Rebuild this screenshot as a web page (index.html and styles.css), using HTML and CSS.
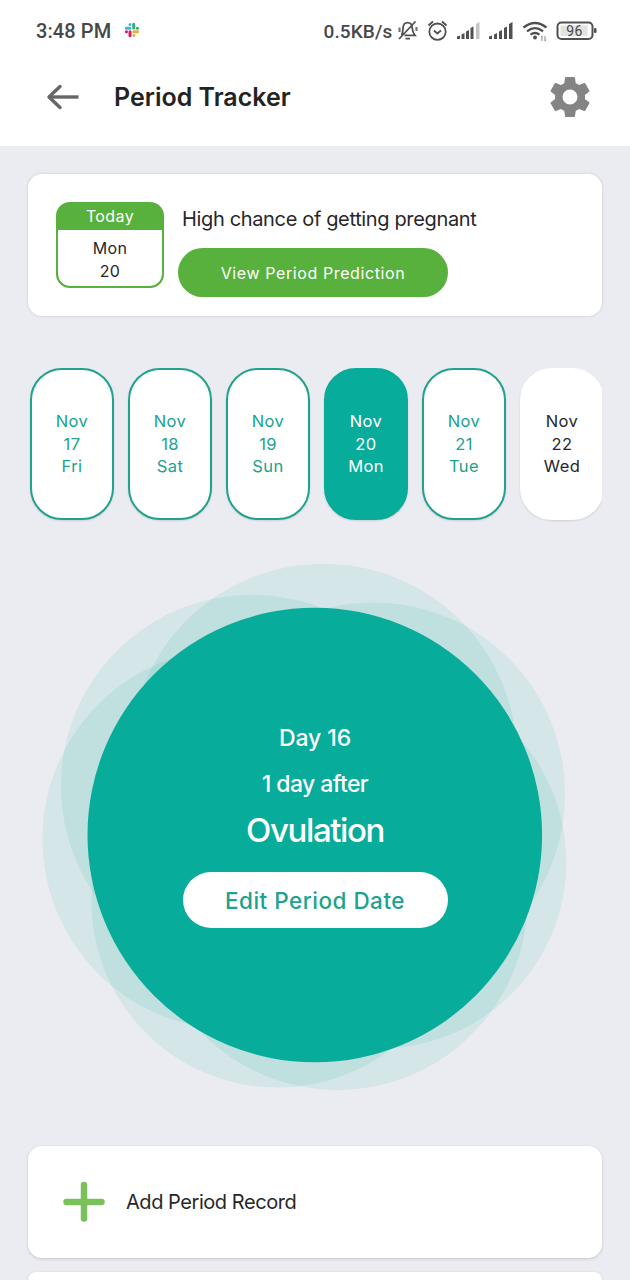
FILE: index.html
```html
<!DOCTYPE html>
<html lang="en">
<head>
<meta charset="utf-8">
<title>Period Tracker</title>
<link rel="stylesheet" href="styles.css">
</head>
<body>
<div class="top">
  <div class="status">
    <span class="clock">3:48 PM</span>
    <svg class="slack" width="16" height="16" viewBox="0 0 16 16" fill="none" stroke-width="3" stroke-linecap="round">
      <path stroke="#36b9e0" d="M2.300 6.200H6M6 2.500V2.600"/>
      <path stroke="#2fae7c" d="M9.700 2.300V6M13.400 6.200H13.500"/>
      <path stroke="#e8b03a" d="M9.800 9.800H13.700M9.800 13.400V13.500"/>
      <path stroke="#d3205c" d="M6 9.800V13.700M2.400 9.800H2.500"/>
    </svg>
    <span class="speed">0.5KB/s</span>
    <svg class="sicons" width="202" height="24" viewBox="396 18 202 24" fill="none" stroke="#505050" stroke-width="1.8">
      <path d="M401.500 35C403 33 402.800 30 403 28C403.300 24.500 405 22.700 407.500 22.700S412 24.500 412.200 28C412.400 31 413 33 415 35.300H404.500M405.500 38.700H410M399 39L415.500 21.500" />
      <path d="M399.500 27.500V32M416.500 27V31" stroke="#777" stroke-width="2.200"/>
      <circle cx="437.500" cy="31.700" r="8.200"/>
      <path d="M434 30.500L437.300 33.500L441 30.500M428.500 25.500L433 21.500M442 21.500L446.500 25.500"/>
      <g stroke="none" fill="#505050">
        <path d="M457 36.500L460 35.500V39H457ZM461.500 34.500L464.500 33V39H461.500ZM466 31.500L469 30V39H466ZM470.500 28L473.500 26.500V39H470.500Z"/>
        <path fill="#c4c4c4" d="M476 24L479.500 22V39H476Z"/>
        <path d="M489 36.500L492 35.500V39H489ZM494 34.500L497 33V39H494ZM499 31.500L502 30V39H499ZM504 28L507 26.500V39H504ZM509 24L512.500 22V39H509Z"/>
        <circle cx="535" cy="37.500" r="2"/>
      </g>
      <path stroke-width="2.300" d="M523.500 27.500Q535 18.500 546.500 27.500M527 31.300Q535 25 543 31.300M530.500 34.700Q535 31.200 539.500 34.700"/>
      <path stroke="#888" stroke-width="1" d="M542 36V41M540.800 37.300L542 36M545 36V41M546.200 39.700L545 41"/>
      <rect x="557.500" y="22.500" width="35" height="16.500" rx="4" stroke-width="2"/>
      <rect x="560.500" y="25.500" width="27" height="10.500" fill="#e2e2e2" stroke="none"/>
      <rect x="594" y="28" width="2.500" height="5" rx="1" fill="#505050" stroke="none"/>
      <text x="574.500" y="35.500" class="battery" text-anchor="middle">96</text>
    </svg>
  </div>
  <div class="appbar">
    <svg class="back" width="34" height="26" viewBox="0 0 34 26" fill="none" stroke="#666" stroke-width="3.400" stroke-linecap="round" stroke-linejoin="round"><path d="M14 2.500L3 13L14 23.500"/><path stroke-linecap="butt" d="M3 13H32.500"/></svg>
    <h1 class="title">Period Tracker</h1>
    <svg class="gear" width="48" height="48" viewBox="0 0 24 24"><path fill="#848484" d="M19.430 12.980c.04-.32.070-.64.070-.98s-.03-.66-.07-.98l2.110-1.650c.19-.15.240-.42.120-.64l-2-3.460c-.12-.22-.39-.3-.61-.22l-2.490 1c-.52-.4-1.080-.73-1.690-.98l-.38-2.650C14.460 2.180 14.250 2 14 2h-4c-.25 0-.46.18-.49.420l-.38 2.650c-.61.250-1.170.59-1.690.98l-2.490-1c-.23-.09-.49 0-.61.220l-2 3.460c-.13.220-.07.490.120.640l2.110 1.650c-.04.320-.07.650-.07.980s.03.660.070.980l-2.110 1.650c-.19.150-.24.420-.12.640l2 3.460c.12.220.39.300.61.220l2.490-1c.52.400 1.080.73 1.690.98l.38 2.650c.03.240.24.420.49.420h4c.25 0 .46-.18.490-.42l.38-2.650c.61-.25 1.170-.59 1.690-.98l2.490 1c.23.090.49 0 .61-.22l2-3.460c.12-.22.070-.49-.12-.64zM12 15.750a3.750 3.750 0 1 1 0-7.500 3.750 3.750 0 0 1 0 7.500z"/></svg>
  </div>
</div>
<main class="content">
  <section class="card chance">
    <div class="today">
      <div class="today-head">Today</div>
      <div class="today-body">Mon<br>20</div>
    </div>
    <div class="chance-info">
      <p class="chance-text">High chance of getting pregnant</p>
      <button class="predict">View Period Prediction</button>
    </div>
  </section>
  <div class="days">
    <div class="day">Nov<br>17<br>Fri</div>
    <div class="day">Nov<br>18<br>Sat</div>
    <div class="day">Nov<br>19<br>Sun</div>
    <div class="day selected">Nov<br>20<br>Mon</div>
    <div class="day">Nov<br>21<br>Tue</div>
    <div class="day plain">Nov<br>22<br>Wed</div>
  </div>
  <section class="cycle">
    <svg class="petals" width="574" height="540" viewBox="28 556 574 540">
      <g fill="#08ac90" fill-opacity=".1">
        <circle cx="323.500" cy="757.200" r="193.500"/>
        <circle cx="252.300" cy="786" r="191.300"/>
        <circle cx="373.500" cy="794" r="191.500"/>
        <circle cx="233" cy="839" r="190.500"/>
        <circle cx="380" cy="862" r="186.300"/>
        <circle cx="277.500" cy="901.500" r="186"/>
        <circle cx="337.500" cy="900" r="190"/>
      </g>
      <circle cx="314.800" cy="835" r="227.300" fill="#08ac9a"/>
    </svg>
    <div class="cycle-info">
      <p class="cycle-day">Day 16</p>
      <p class="cycle-after">1 day after</p>
      <p class="cycle-phase">Ovulation</p>
      <button class="edit">Edit Period Date</button>
    </div>
  </section>
  <section class="card record">
    <svg width="42" height="42" viewBox="0 0 42 42" stroke="#7bc15a" stroke-width="6.500" stroke-linecap="round"><path d="M21 4V37.500M3.500 21H38.500"/></svg>
    <span class="record-text">Add Period Record</span>
  </section>
  <section class="card next"></section>
</main>
</body>
</html>
```
FILE: styles.css
```css
* { box-sizing: border-box; }
body { margin: 0; width: 630px; height: 1280px; overflow: hidden; background: #ebecf2; color: #27272a; font-family: Inter, "Noto Sans", sans-serif; }
p, h1 { margin: 0; white-space: nowrap; }
button { border: 0; padding: 0; font-family: inherit; white-space: nowrap; }
.top { height: 146px; background: #fff; }
.status { height: 62px; padding-left: 36px; display: flex; align-items: center; font-family: Roboto, sans-serif; font-weight: 500; color: #484848; }
.clock { font-size: 20px; width: 88px; letter-spacing: .1px; }
.slack { margin-top: -2px; }
.speed { margin-left: 183.500px; width: 72.500px; font-size: 19px; letter-spacing: .1px; white-space: nowrap; }
.sicons { margin-top: -3px; flex: none; }
.battery { font: 400 14px Roboto, sans-serif; fill: #484848; stroke: none; letter-spacing: .4px; }
.appbar { height: 70px; padding-left: 46px; display: flex; align-items: center; }
.title { margin-left: 34px; width: 432px; font-size: 25px; font-weight: 600; color: #232323; }
.content { padding: 28px 28px 0; }
.card { background: #fff; border-radius: 14px; box-shadow: 0 1px 3px rgba(40,45,60,.2); }
.chance { height: 142px; padding: 28px; display: flex; align-items: flex-start; box-shadow: 0 0 3px rgba(40,45,60,.18); }
.today { width: 108px; height: 86px; border: 2px solid #58b13c; border-radius: 14px; overflow: hidden; text-align: center; font-size: 16px; letter-spacing: .4px; background: #58b13c; }
.today-head { height: 26px; line-height: 25px; color: #fff; }
.today-body { height: 56px; padding-top: 7px; line-height: 23px; background: #fff; border-radius: 0 0 12px 12px; }
.chance-info { margin-left: 14px; }
.chance-text { margin-left: 4px; height: 46px; line-height: 34px; font-size: 20px; letter-spacing: -.35px; }
.predict { width: 270px; height: 49px; border-radius: 25px; background: #58b13c; color: #fff; font-size: 16px; letter-spacing: .6px; }
.days { margin-top: 51px; height: 155px; padding: 1px 0 3px 2px; display: flex; gap: 14px; overflow: hidden; }
.day { flex: 0 0 84px; height: 152px; padding-top: 40px; border: 2px solid #20a28e; border-radius: 32px; background: #fff; color: #20a28e; text-align: center; line-height: 22.700px; font-size: 16.500px; letter-spacing: .4px; box-shadow: 0 1px 2px rgba(40,45,60,.15); }
.day.selected { background: #08ac9a; border-color: #08ac9a; color: #fff; }
.day.plain { border-color: #fff; color: #27272a; }
.cycle { margin-top: 34px; height: 540px; display: grid; }
.petals, .cycle-info { grid-area: 1 / 1; }
.cycle-info { padding-top: 164px; display: flex; flex-direction: column; align-items: center; color: #fff; font-weight: 500; }
.cycle-day { height: 46px; line-height: 36px; font-size: 23px; letter-spacing: -.1px; }
.cycle-after { height: 42px; line-height: 36px; font-size: 23px; letter-spacing: -.6px; }
.cycle-phase { height: 64px; line-height: 45px; font-size: 33px; letter-spacing: -1.400px; }
.edit { width: 265px; height: 56px; border-radius: 28px; background: #fff; color: #20a28e; font-size: 22.500px; font-weight: 500; letter-spacing: .5px; }
.record { margin-top: 50px; height: 112px; padding-left: 35px; display: flex; align-items: center; }
.record-text { margin-left: 21px; font-size: 20px; letter-spacing: -.45px; }
.next { margin-top: 14px; height: 8px; border-radius: 14px 14px 0 0; }
```
